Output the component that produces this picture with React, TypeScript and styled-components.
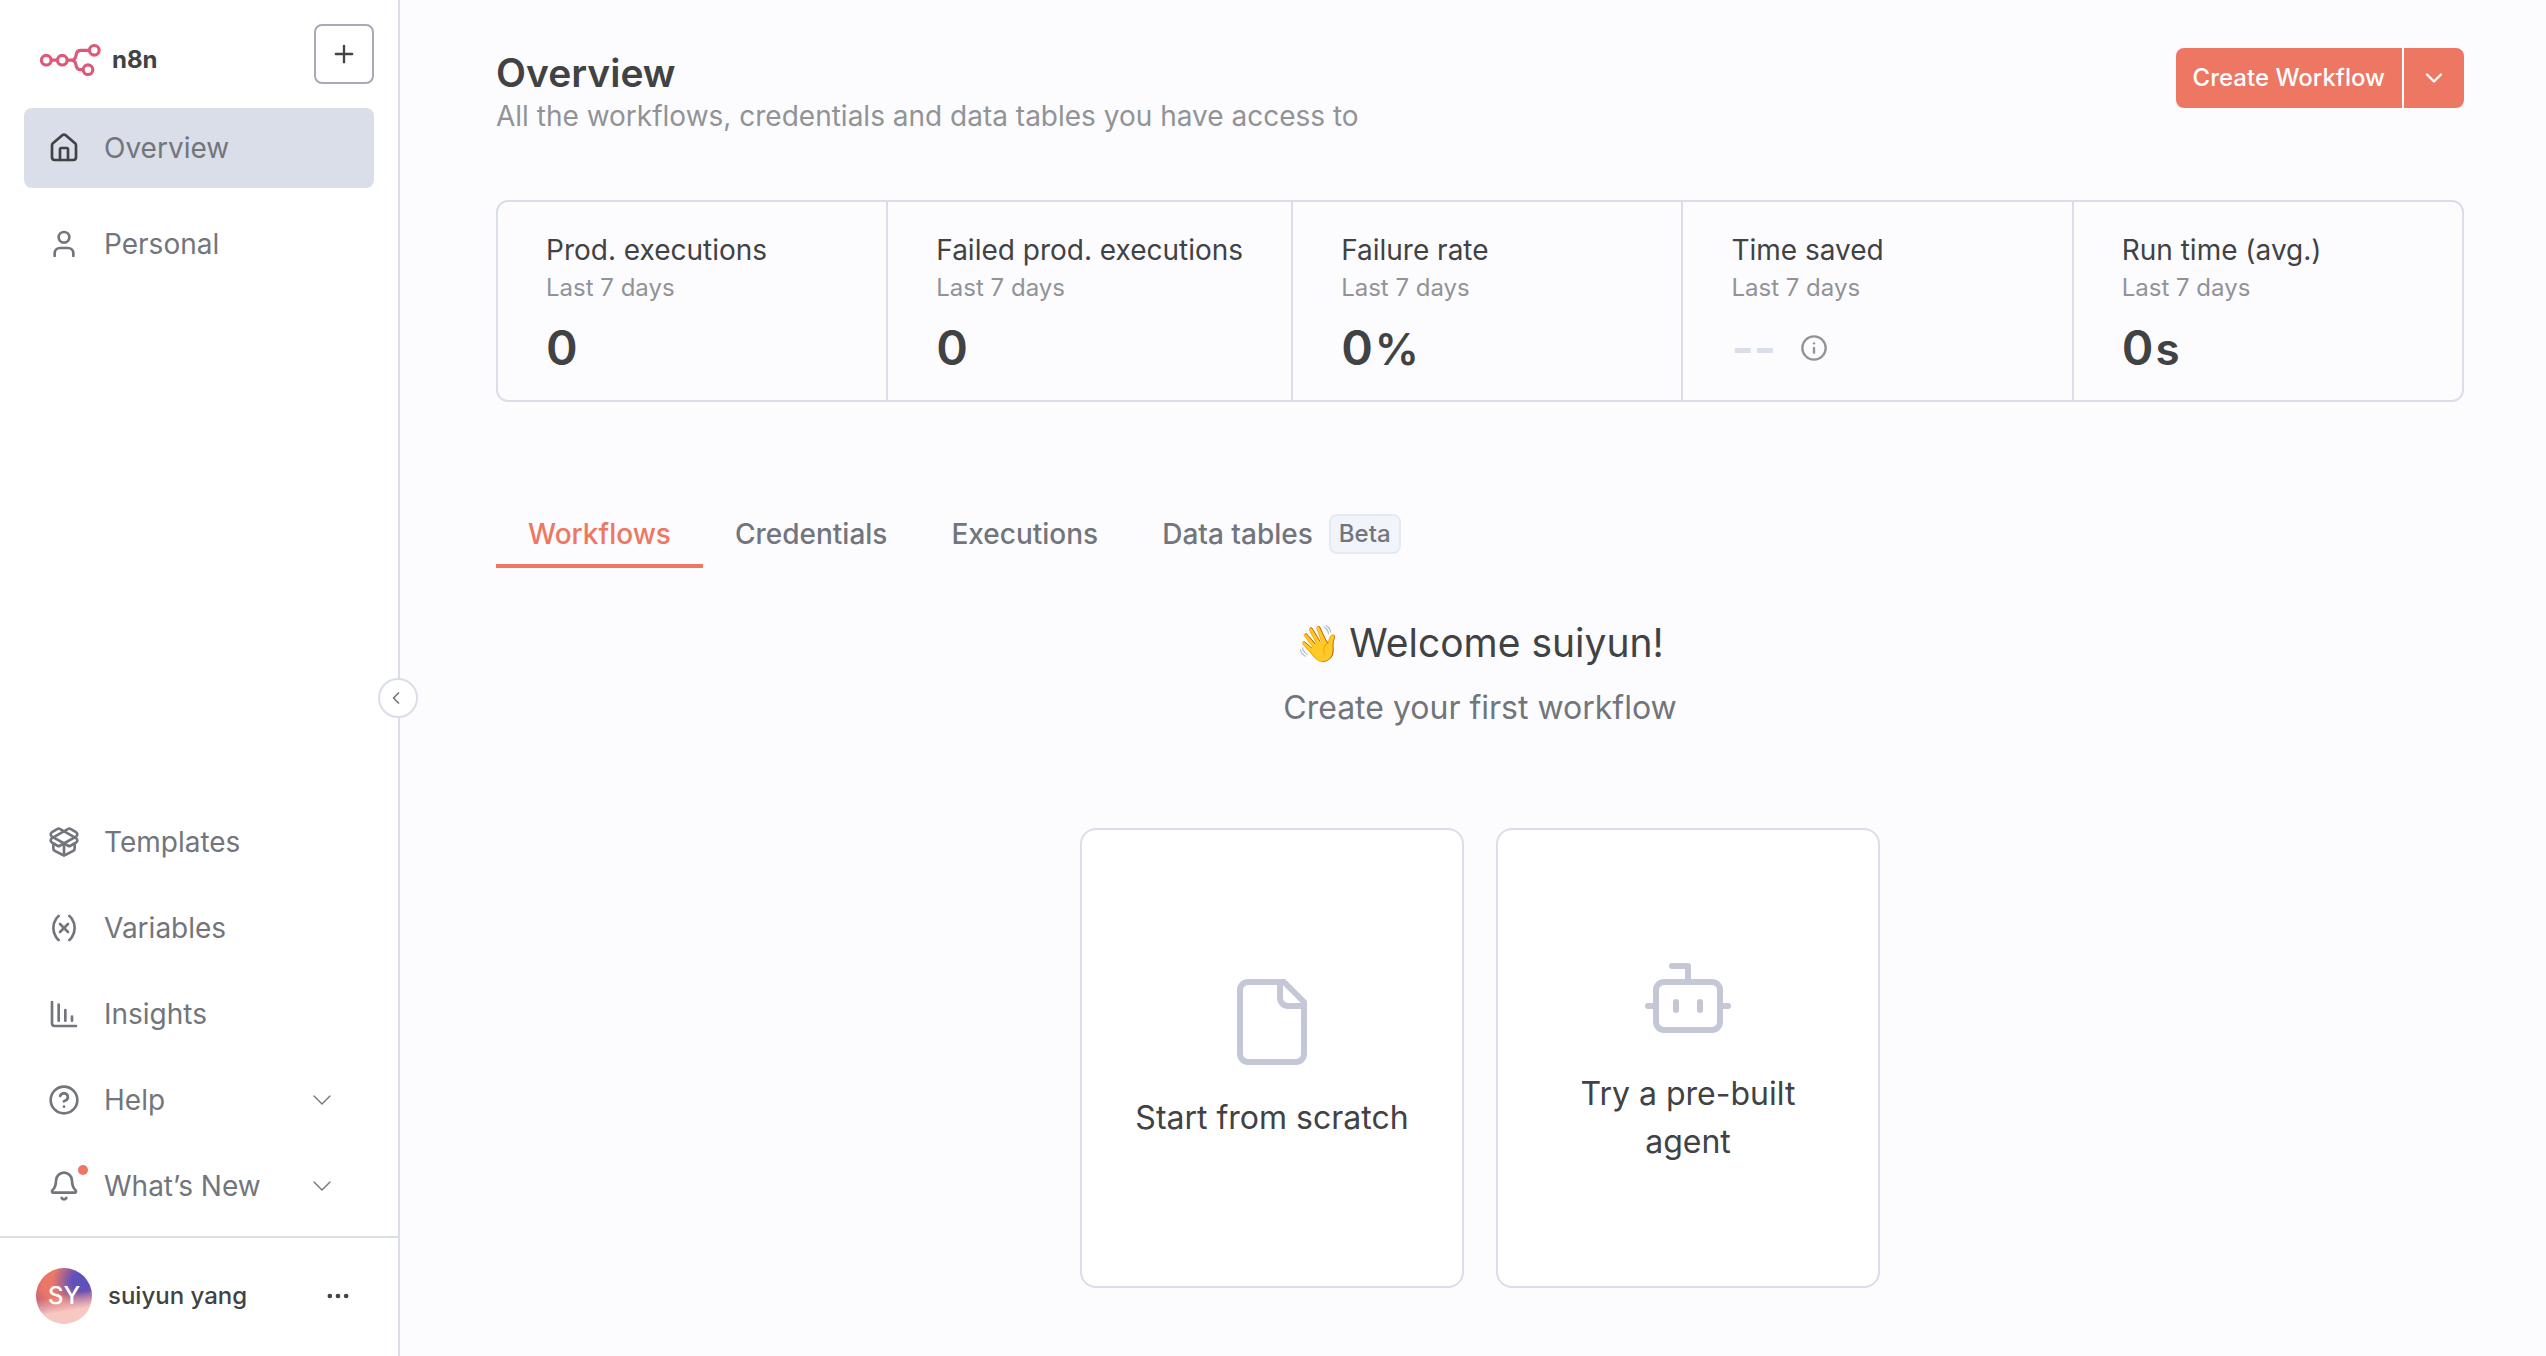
import React from 'react';
import styled, { createGlobalStyle, css } from 'styled-components';
import {
  Bell,
  Bot,
  ChartColumnDecreasing,
  ChevronDown,
  ChevronLeft,
  CircleQuestionMark,
  Ellipsis,
  House,
  Info,
  PackageOpen,
  Plus,
  User,
  Variable,
  type LucideIcon,
} from 'lucide-react';

const color = {
  primary: '#ee7763',
  textDark: '#414244',
  textBase: '#72757c',
  textLight: '#919397',
  border: '#d9dee8',
  borderStrong: '#a6a9b8',
  iconMuted: '#c4c8d6',
  page: '#fcfcfe',
  surface: '#ffffff',
};

const GlobalStyle = createGlobalStyle`
  *, *::before, *::after { box-sizing: border-box; }
  body {
    margin: 0;
    background: ${color.page};
    color: ${color.textDark};
    font-family: Inter, "Liberation Sans", sans-serif;
    font-size: 28px;
    line-height: 36px;
  }
  button { font: inherit; color: inherit; cursor: pointer; }
  h1, h2, p, ul, dl, dt, dd { margin: 0; padding: 0; }
  svg { display: block; flex: none; }
`;

const Layout = styled.div`
  display: flex;
  min-height: 100vh;
`;

/* ---------- Sidebar ---------- */

const Sidebar = styled.aside`
  position: sticky;
  top: 0;
  flex: none;
  display: flex;
  flex-direction: column;
  width: 400px;
  height: 100vh;
  background: ${color.surface};
  border-right: 2px solid ${color.border};
`;

const SidebarHeader = styled.header`
  display: flex;
  align-items: center;
  justify-content: space-between;
  padding: 24px 24px 24px 40px;
`;

const Brand = styled.a`
  display: flex;
  align-items: center;
  gap: 10px;
  padding-top: 12px;
  color: ${color.textDark};
  font-size: 24px;
  line-height: 32px;
  font-weight: 700;
  text-decoration: none;
`;

const AddButton = styled.button`
  display: grid;
  place-items: center;
  width: 60px;
  height: 60px;
  padding: 0;
  background: ${color.surface};
  border: 2px solid ${color.borderStrong};
  border-radius: 8px;
`;

const NavList = styled.ul<{ $gap: number }>`
  display: flex;
  flex-direction: column;
  gap: ${({ $gap }) => $gap}px;
  padding: 0 24px;
  list-style: none;
`;

const SidebarBottom = styled.div`
  margin-top: auto;
  padding-bottom: 10px;
`;

const navItem = css`
  display: flex;
  align-items: center;
  gap: 24px;
  width: 100%;
  height: 80px;
  padding: 0 36px 0 24px;
  border: 0;
  border-radius: 8px;
  background: none;
  color: ${color.textBase};
  text-align: left;
  text-decoration: none;
`;

const NavLink = styled.a<{ $active?: boolean }>`
  ${navItem}
  ${({ $active }) =>
    $active &&
    css`
      background: ${color.border};
      svg { color: ${color.textDark}; }
    `}
`;

const NavButton = styled.button`
  ${navItem}
`;

const NavLabel = styled.span`
  flex: 1;
`;

const IconSlot = styled.span`
  position: relative;
  display: block;
`;

const NoticeDot = styled.span`
  position: absolute;
  top: -5px;
  right: -8px;
  width: 10px;
  height: 10px;
  border-radius: 50%;
  background: ${color.primary};
`;

const CollapseButton = styled.button`
  position: absolute;
  top: 50%;
  right: -20px;
  display: grid;
  place-items: center;
  width: 40px;
  height: 40px;
  padding: 0 4px 0 0;
  background: ${color.surface};
  border: 2px solid ${color.border};
  border-radius: 50%;
  color: ${color.textBase};
`;

const UserBar = styled.footer`
  display: flex;
  align-items: center;
  gap: 16px;
  padding: 30px 46px 32px 36px;
  border-top: 2px solid ${color.border};
`;

const Avatar = styled.span`
  display: grid;
  place-items: center;
  width: 56px;
  height: 56px;
  border-radius: 50%;
  background:
    linear-gradient(170deg, rgba(247, 200, 194, 0) 48%, #f7c8c2 74%),
    radial-gradient(ellipse at 80% 24%, #5f50bd 14%, rgba(95, 80, 189, 0) 44%),
    radial-gradient(circle at 38% 30%, #ea7768 28%, #b0587c 62%);
  color: #ffffff;
  font-size: 24px;
  line-height: 32px;
  font-weight: 500;
`;

const UserName = styled.span`
  flex: 1;
  font-size: 24px;
  line-height: 32px;
  font-weight: 500;
`;

const PlainButton = styled.button`
  padding: 0;
  border: 0;
  background: none;
`;

/* ---------- Main ---------- */

const Main = styled.main`
  flex: 1;
  min-width: 0;
  padding: 48px 82px 64px 96px;
`;

const PageHeader = styled.header`
  display: flex;
  align-items: flex-start;
  justify-content: space-between;
  margin-bottom: 66px;
`;

const PageTitle = styled.h1`
  font-size: 39px;
  line-height: 50px;
  font-weight: 600;
`;

const PageSubtitle = styled.p`
  color: ${color.textLight};
`;

const SplitButton = styled.div`
  display: flex;
  gap: 2px;
  height: 60px;
  border-radius: 8px;
  overflow: hidden;
  background: ${color.surface};
`;

const SplitPart = styled.button<{ $icon?: boolean }>`
  display: grid;
  place-items: center;
  min-width: 60px;
  padding: ${({ $icon }) => ($icon ? '0' : '0 17px')};
  border: 0;
  background: ${color.primary};
  color: #ffffff;
  font-size: 24px;
  line-height: 32px;
  font-weight: 500;
`;

const Summary = styled.dl`
  display: flex;
  border: 2px solid ${color.border};
  border-radius: 12px;
`;

const Metric = styled.div`
  flex: 1;
  padding: 30px 48px 28px;
  white-space: nowrap;
  & + & { border-left: 2px solid ${color.border}; }
`;

const MetricPeriod = styled.dd`
  margin-bottom: 16px;
  color: ${color.textLight};
  font-size: 24px;
  line-height: 40px;
`;

const MetricValue = styled.dd<{ $empty?: boolean }>`
  display: flex;
  align-items: ${({ $empty }) => ($empty ? 'center' : 'baseline')};
  gap: ${({ $empty }) => ($empty ? 24 : 2)}px;
  height: 48px;
  color: ${({ $empty }) => ($empty ? color.border : color.textDark)};
  font-size: 48px;
  line-height: 48px;
  font-weight: 600;
  svg { color: ${color.textLight}; }
`;

const Unit = styled.span`
  font-size: 44px;
`;

const Tabs = styled.nav`
  display: flex;
  margin-top: 112px;
`;

const Tab = styled.a<{ $active?: boolean }>`
  display: flex;
  align-items: center;
  gap: 16px;
  padding: 0 32px 10px;
  border-bottom: 4px solid ${({ $active }) => ($active ? color.primary : 'transparent')};
  color: ${({ $active }) => ($active ? color.primary : color.textBase)};
  line-height: 40px;
  font-weight: 500;
  text-decoration: none;
`;

const Badge = styled.span`
  padding: 0 8px;
  border: 2px solid #e5e9f2;
  border-radius: 8px;
  background: #f1f4fa;
  font-size: 24px;
  line-height: 36px;
`;

const Welcome = styled.section`
  display: flex;
  flex-direction: column;
  align-items: center;
  margin-top: 50px;
`;

const WelcomeTitle = styled.h2`
  display: flex;
  align-items: center;
  gap: 8px;
  font-size: 39px;
  line-height: 50px;
  font-weight: 400;
`;

const Emoji = styled.span`
  font-size: 36px;
`;

const WelcomeText = styled.p`
  margin-top: 16px;
  color: ${color.textBase};
  font-size: 32px;
  line-height: 48px;
`;

const Cards = styled.div`
  display: flex;
  flex-wrap: wrap;
  justify-content: center;
  gap: 32px;
  margin-top: 96px;
`;

const ActionCard = styled.button`
  display: flex;
  flex-direction: column;
  align-items: center;
  justify-content: center;
  gap: 24px;
  width: 384px;
  height: 460px;
  padding: 48px;
  background: ${color.surface};
  border: 2px solid ${color.border};
  border-radius: 16px;
  font-size: 32px;
  line-height: 48px;
  svg { color: ${color.iconMuted}; }
`;

const LogoMark = () => (
  <svg width="62" height="34" viewBox="0 0 62 34" fill="none" stroke="#de5878" strokeWidth="3.2" aria-hidden="true">
    <circle cx="6.3" cy="17.2" r="4.8" />
    <circle cx="22.3" cy="17.2" r="4.8" />
    <circle cx="54.3" cy="7.3" r="4.8" />
    <circle cx="48" cy="26.7" r="4.8" />
    <path d="M11 17.2h6.5M27 17.2h4c3 0 4.300-1.300 4.900-4.200l.3-1.500c.5-2.700 2-4.200 4.600-4.200h8.700M31 17.200c3 0 4.300 1.300 4.900 4.200l.2 1.100c.5 2.700 2 4.200 4.600 4.200h2.500" />
  </svg>
);

const FileIcon = () => (
  <svg width="96" height="96" viewBox="0 0 24 24" fill="none" stroke="currentColor" strokeWidth="1.5" strokeLinecap="round" strokeLinejoin="round" aria-hidden="true">
    <path d="M15 2H6a2 2 0 0 0-2 2v16a2 2 0 0 0 2 2h12a2 2 0 0 0 2-2V7Z" />
    <path d="M14 2v4a2 2 0 0 0 2 2h4" />
  </svg>
);

interface NavEntry {
  label: string;
  icon: LucideIcon;
  active?: boolean;
  expandable?: boolean;
  notice?: boolean;
}

const primaryNav: NavEntry[] = [
  { label: 'Overview', icon: House, active: true },
  { label: 'Personal', icon: User },
];

const secondaryNav: NavEntry[] = [
  { label: 'Templates', icon: PackageOpen },
  { label: 'Variables', icon: Variable },
  { label: 'Insights', icon: ChartColumnDecreasing },
  { label: 'Help', icon: CircleQuestionMark, expandable: true },
  { label: 'What’s New', icon: Bell, expandable: true, notice: true },
];

const metrics: { label: string; value?: string; unit?: string }[] = [
  { label: 'Prod. executions', value: '0' },
  { label: 'Failed prod. executions', value: '0' },
  { label: 'Failure rate', value: '0', unit: '%' },
  { label: 'Time saved' },
  { label: 'Run time (avg.)', value: '0', unit: 's' },
];

const tabs = [
  { label: 'Workflows', active: true },
  { label: 'Credentials' },
  { label: 'Executions' },
  { label: 'Data tables', badge: 'Beta' },
];

const NavItem = ({ label, icon: Icon, active, expandable, notice }: NavEntry) => {
  const content = (
    <>
      <IconSlot>
        <Icon size={32} />
        {notice && <NoticeDot />}
      </IconSlot>
      <NavLabel>{label}</NavLabel>
      {expandable && <ChevronDown size={32} strokeWidth={1} />}
    </>
  );
  return (
    <li>
      {expandable ? (
        <NavButton type="button" aria-expanded={false}>{content}</NavButton>
      ) : (
        <NavLink href="#" $active={active} aria-current={active ? 'page' : undefined}>{content}</NavLink>
      )}
    </li>
  );
};

export default function App() {
  return (
    <>
      <GlobalStyle />
      <Layout>
        <Sidebar>
          <SidebarHeader>
            <Brand href="#"><LogoMark />n8n</Brand>
            <AddButton type="button" aria-label="Add"><Plus size={28} /></AddButton>
          </SidebarHeader>
          <NavList $gap={16}>
            {primaryNav.map((item) => <NavItem key={item.label} {...item} />)}
          </NavList>
          <SidebarBottom>
            <NavList $gap={6}>
              {secondaryNav.map((item) => <NavItem key={item.label} {...item} />)}
            </NavList>
          </SidebarBottom>
          <UserBar>
            <Avatar>SY</Avatar>
            <UserName>suiyun yang</UserName>
            <PlainButton type="button" aria-label="User menu"><Ellipsis size={28} /></PlainButton>
          </UserBar>
          <CollapseButton type="button" aria-label="Collapse sidebar"><ChevronLeft size={20} /></CollapseButton>
        </Sidebar>

        <Main>
          <PageHeader>
            <div>
              <PageTitle>Overview</PageTitle>
              <PageSubtitle>All the workflows, credentials and data tables you have access to</PageSubtitle>
            </div>
            <SplitButton>
              <SplitPart type="button">Create Workflow</SplitPart>
              <SplitPart type="button" $icon aria-label="More options"><ChevronDown size={28} /></SplitPart>
            </SplitButton>
          </PageHeader>

          <Summary>
            {metrics.map(({ label, value, unit }) => (
              <Metric key={label}>
                <dt>{label}</dt>
                <MetricPeriod>Last 7 days</MetricPeriod>
                <MetricValue $empty={!value}>
                  {value ?? '--'}
                  {unit && <Unit>{unit}</Unit>}
                  {!value && <Info size={28} />}
                </MetricValue>
              </Metric>
            ))}
          </Summary>

          <Tabs>
            {tabs.map(({ label, active, badge }) => (
              <Tab key={label} href="#" $active={active}>
                {label}
                {badge && <Badge>{badge}</Badge>}
              </Tab>
            ))}
          </Tabs>

          <Welcome>
            <WelcomeTitle><Emoji>👋</Emoji>Welcome suiyun!</WelcomeTitle>
            <WelcomeText>Create your first workflow</WelcomeText>
            <Cards>
              <ActionCard type="button"><FileIcon />Start from scratch</ActionCard>
              <ActionCard type="button"><Bot size={96} strokeWidth={1.5} />Try a pre-built agent</ActionCard>
            </Cards>
          </Welcome>
        </Main>
      </Layout>
    </>
  );
}
